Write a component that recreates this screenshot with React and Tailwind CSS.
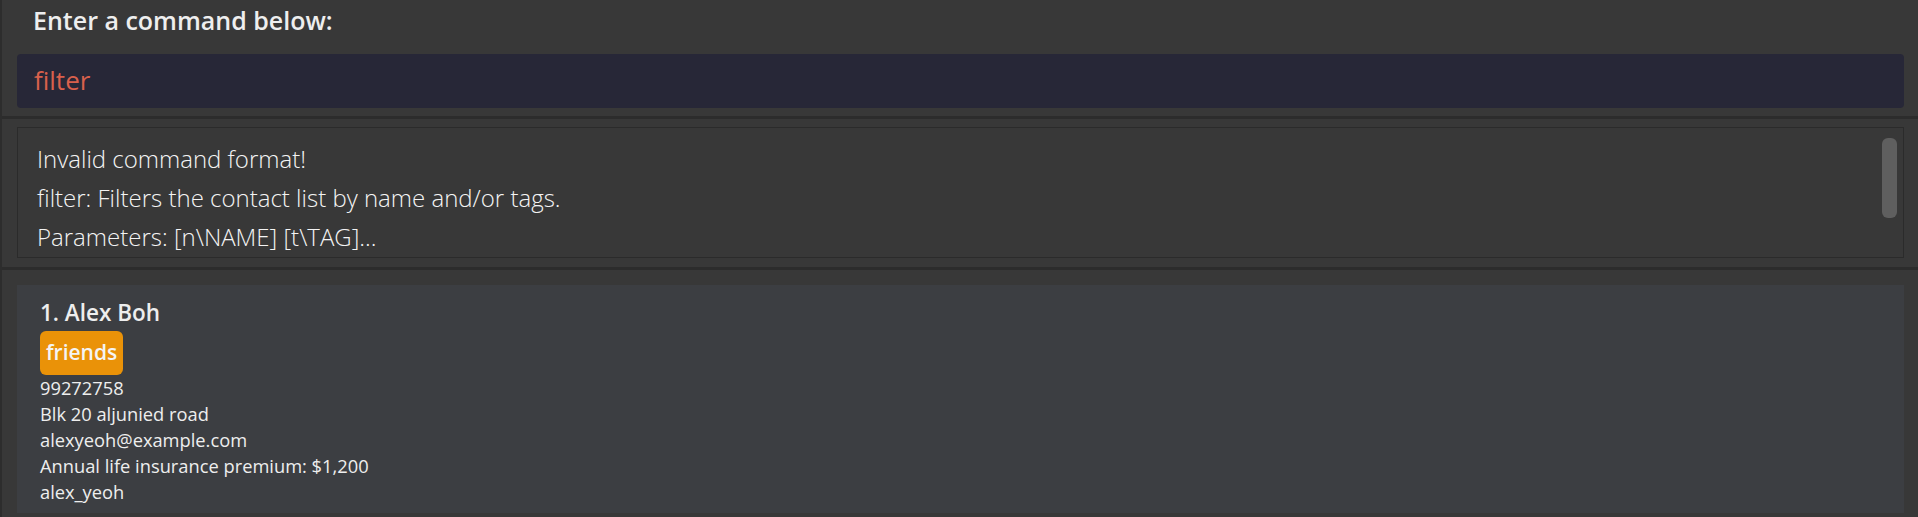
import React from "react";

const SANS = { fontFamily: '"Open Sans", "Noto Sans", "Liberation Sans", sans-serif' };

export default function App() {
  return (
    <div
      className="w-[1918px] h-[517px] overflow-hidden bg-[#383838] border-l-2 border-[#2d2d2d] flex flex-col"
      style={SANS}
    >
      {/* command section */}
      <div className="h-[116px] shrink-0 flex flex-col pl-[15px] pr-[14px]">
        <div className="h-[54px] pl-[16px] pt-[3px] text-[25px] leading-[34px] font-semibold text-[#eeeeee]">
          Enter a command below:
        </div>
        <div className="h-[54px] rounded-[4px] bg-[#272737] flex items-center pl-[17px] pb-[2px] text-[26px] text-[#d9604c]">
          filter
        </div>
      </div>
      <div className="h-[3px] shrink-0 bg-[#2c2c2c]" />

      {/* result display */}
      <div className="h-[148px] shrink-0 pl-[15px] pr-[14px] pt-[8px] pb-[9px]">
        <div className="relative h-full border border-[#2b2b2b] pl-[19px] pt-[11px]">
          <div className="text-[24px] leading-[39px] font-light text-[#f4f4f4]">
            <div>Invalid command format!</div>
            <div>filter: Filters the contact list by name and/or tags.</div>
            <div>Parameters: [n\NAME] [t\TAG]...</div>
          </div>
          <div className="absolute right-[6px] top-[10px] w-[15px] h-[80px] rounded-[6px] bg-[#5f5f5f]" />
        </div>
      </div>
      <div className="h-[3px] shrink-0 bg-[#2c2c2c]" />

      {/* person list */}
      <div className="flex-1 pl-[15px] pr-[14px] pt-[15px] pb-[4px]">
        <div className="h-full bg-[#3c3e42] pl-[23px] pt-[13px]">
          <div className="text-[22.5px] leading-[30px] font-semibold text-[#eeeeee]">1. Alex Boh</div>
          <div className="mt-[3px] flex">
            <span className="h-[44px] px-[6px] rounded-[6px] bg-[#ea9208] text-[21px] font-semibold text-[#f4f4f4] flex items-center">
              friends
            </span>
          </div>
          <div className="text-[18.3px] leading-[26px] text-[#eeeeee]">
            <div>99272758</div>
            <div>Blk 20 aljunied road</div>
            <div>alexyeoh@example.com</div>
            <div>Annual life insurance premium: $1,200</div>
            <div>alex_yeoh</div>
          </div>
        </div>
      </div>
    </div>
  );
}
